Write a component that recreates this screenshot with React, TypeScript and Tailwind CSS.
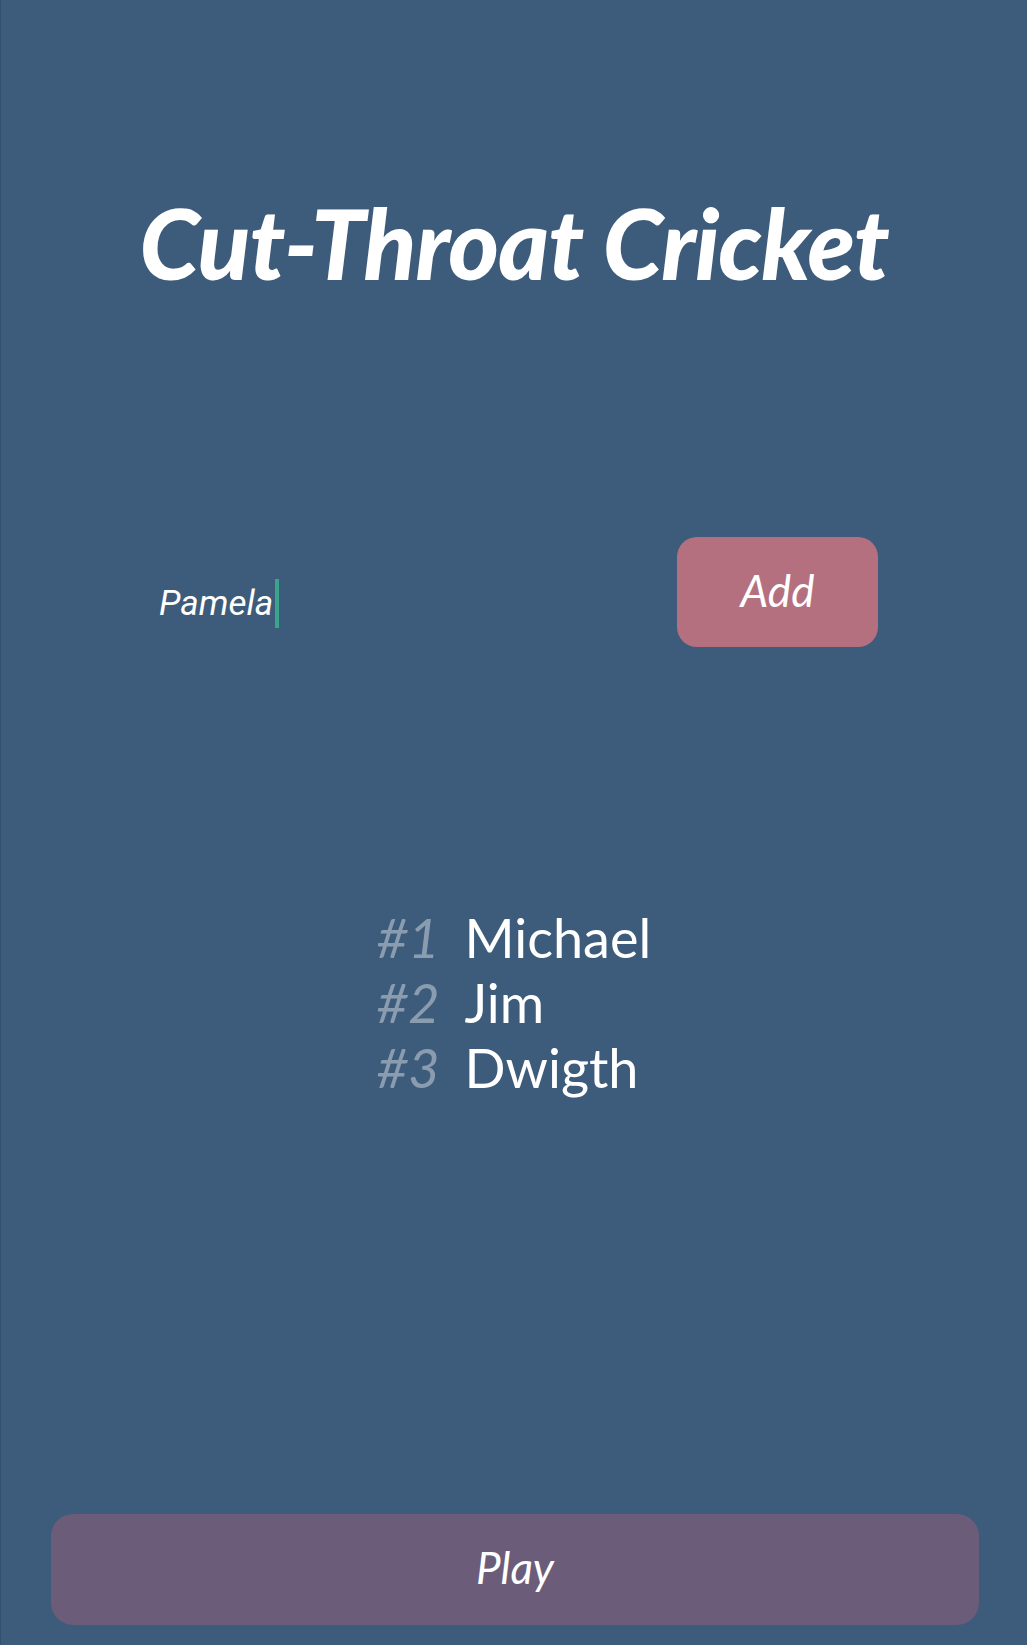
import React from "react";

const players = ["Michael", "Jim", "Dwigth"];

export default function App() {
  return (
    <div className="w-full min-h-[1645px] bg-[#3d5b7a] border-l border-[#33506c] flex flex-col font-['Lato',sans-serif] text-white">
      <h1 className="mt-[183px] text-center text-[97px] leading-[120px] font-black italic tracking-[-1px]">
        Cut-Throat Cricket
      </h1>

      <div className="mt-[234px] flex items-start pl-[158px] pr-[149px]">
        <div className="mt-[42px] flex items-center h-[49px]">
          <span className="font-['Roboto',sans-serif] italic text-[35px] leading-[49px]">Pamela</span>
          <span className="ml-[2px] w-[4px] h-[49px] bg-[#3aa58a]" />
        </div>
        <button className="ml-auto w-[201px] h-[110px] rounded-[20px] bg-[#b57080] italic text-[44px] text-white pb-[5px]">
          Add
        </button>
      </div>

      <div className="mt-[258px] self-center flex flex-col">
        {players.map((p, i) => (
          <div key={p} className="flex text-[54px] leading-[65px]">
            <span className="italic text-white/40 mr-[25px]">#{i + 1}</span>
            <span>{p}</span>
          </div>
        ))}
      </div>

      <button className="mt-auto mb-[20px] ml-[50px] mr-[48px] h-[111px] rounded-[22px] bg-[#6b5c79] italic text-[44px] text-white pb-[5px]">
        Play
      </button>
    </div>
  );
}
